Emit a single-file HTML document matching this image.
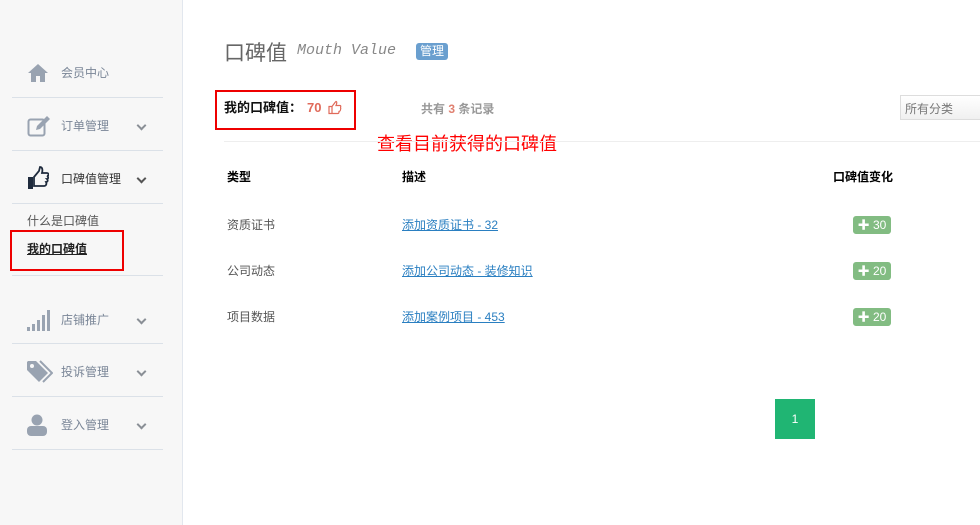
<!DOCTYPE html>
<html><head><meta charset="utf-8"><style>
*{margin:0;padding:0;box-sizing:border-box}
body{width:980px;height:525px;background:#fff;font-family:"Liberation Sans","Noto Sans CJK SC",sans-serif;font-size:12px;position:relative;overflow:hidden;color:#555}
.a{position:absolute;white-space:nowrap}
#side{position:absolute;left:0;top:0;width:183px;height:525px;background:#f7f7f7;border-right:1px solid #e2e7ee}
.ln{position:absolute;left:12px;width:151px;height:1px;background:#dbe1e8}
.mi{position:absolute;left:61px;color:#7a8697;font-size:12px;line-height:14px}
.chev{position:absolute;left:138px;width:7px;height:7px;border-right:2px solid #8a8f96;border-bottom:2px solid #8a8f96;transform:rotate(45deg)}
.badge{position:absolute;left:853px;width:38px;height:18px;background:#82bc82;border-radius:3px;color:#fff;font-size:12px;line-height:18px;text-align:center}
.lnk{color:#2a7fc1;text-decoration:underline}
</style></head><body>
<div id="side">
<svg class="a" style="left:27px;top:63px" width="22" height="20" viewBox="0 0 22 20"><path d="M11 1L1 10h3v9h5v-6h4v6h5v-9h3z" fill="#99a3b1"/></svg>
<div class="mi" style="top:66px">会员中心</div>
<div class="ln" style="top:97px"></div>
<svg class="a" style="left:27px;top:115px" width="24" height="22" viewBox="0 0 24 22"><rect x="1.5" y="4.5" width="16" height="16" rx="2" fill="none" stroke="#99a3b1" stroke-width="2"/><path d="M9 15l1-4 10-10 3 3-10 10z" fill="#99a3b1"/></svg>
<div class="mi" style="top:119px">订单管理</div><div class="chev" style="top:122px"></div>
<div class="ln" style="top:150px"></div>
<svg class="a" style="left:27px;top:166px" width="22" height="25" viewBox="0 0 22 25"><rect x="1" y="11" width="5" height="12" fill="#1f2b3d"/><path d="M7 11l5-6 1-4c2 0 3 2 2 6h5c2 0 2 3 0 3 2 1 1 3 0 3 1 1 1 3-1 3 1 2 0 4-2 4H7z" fill="none" stroke="#1f2b3d" stroke-width="1.8"/></svg>
<div class="mi" style="top:172px;color:#333">口碑值管理</div><div class="chev" style="top:175px;border-color:#555"></div>
<div class="ln" style="top:203px"></div>
<div class="a" style="left:27px;top:212px;color:#555">什么是口碑值</div>
<div class="a" style="left:27px;top:240px;color:#222;font-weight:bold;text-decoration:underline">我的口碑值</div>
<div class="a" style="left:10px;top:230px;width:114px;height:41px;border:2px solid #e00"></div>
<div class="ln" style="top:275px"></div>
<svg class="a" style="left:27px;top:309px" width="24" height="22"><rect x="0" y="18" width="3" height="4" fill="#99a3b1"/><rect x="5" y="15" width="3" height="7" fill="#99a3b1"/><rect x="10" y="11" width="3" height="11" fill="#99a3b1"/><rect x="15" y="6" width="3" height="16" fill="#99a3b1"/><rect x="20" y="1" width="3" height="21" fill="#99a3b1"/></svg>
<div class="mi" style="top:313px">店铺推广</div><div class="chev" style="top:316px"></div>
<div class="ln" style="top:343px"></div>
<svg class="a" style="left:26px;top:360px" width="27" height="24" viewBox="0 0 27 24"><path d="M1 2v8l12 12 9-9L10 1H2z" fill="#99a3b1"/><circle cx="6" cy="6" r="2" fill="#f7f7f7"/><path d="M14 1l12 12-9 9" fill="none" stroke="#99a3b1" stroke-width="2"/></svg>
<div class="mi" style="top:365px">投诉管理</div><div class="chev" style="top:368px"></div>
<div class="ln" style="top:396px"></div>
<svg class="a" style="left:27px;top:414px" width="20" height="22"><circle cx="10" cy="6" r="5.5" fill="#99a3b1"/><rect x="0" y="12" width="20" height="10" rx="4" fill="#99a3b1"/></svg>
<div class="mi" style="top:418px">登入管理</div><div class="chev" style="top:421px"></div>
<div class="ln" style="top:449px"></div>
</div>

<div class="a" style="left:224px;top:37px;font-size:21px;color:#666">口碑值</div>
<div class="a" style="left:297px;top:42px;font-size:15px;color:#888;font-style:italic;font-family:'Liberation Mono',monospace">Mouth Value</div>
<div class="a" style="left:416px;top:43px;width:32px;height:17px;background:#6a9fcf;border-radius:3px;color:#fff;font-size:12px;line-height:17px;text-align:center">管理</div>

<div class="a" style="left:215px;top:90px;width:141px;height:40px;border:2px solid #e00"></div>
<div class="a" style="left:224px;top:100px;height:16px;line-height:16px;font-size:13px;font-weight:bold;color:#111">我的口碑值：</div>
<div class="a" style="left:307px;top:100px;height:16px;line-height:16px;font-size:13px;font-weight:bold;color:#e06a5a">70</div>
<svg class="a" style="left:328px;top:100px" width="14" height="15" viewBox="0 0 14 14"><path d="M1 6h3v7H1zM4 6l3-4 1-1c1 0 1 2 0 4h4c1 0 1 2 0 2 1 0 1 2 0 2 1 0 0 2-1 2 0 1 0 2-1 2H4" fill="none" stroke="#e06a5a" stroke-width="1.2"/></svg>
<div class="a" style="left:421px;top:100px;font-weight:bold;color:#999">共有 <span style="color:#e08070">3</span> 条记录</div>
<div class="a" style="left:900px;top:95px;width:82px;height:25px;border:1px solid #ddd;background:linear-gradient(#fff,#f0f0f0);color:#777;font-size:12px;padding:4px 4px">所有分类</div>
<div class="a" style="left:377px;top:130px;font-size:18px;color:#f00">查看目前获得的口碑值</div>
<div class="a" style="left:224px;top:141px;width:756px;height:1px;background:#eee"></div>

<div class="a" style="left:227px;top:168px;font-weight:bold;color:#000">类型</div>
<div class="a" style="left:402px;top:168px;font-weight:bold;color:#000">描述</div>
<div class="a" style="left:833px;top:168px;font-weight:bold;color:#000">口碑值变化</div>

<div class="a" style="left:227px;top:216px">资质证书</div>
<div class="a lnk" style="left:402px;top:216px">添加资质证书 - 32</div>
<div class="badge" style="top:216px">✚ 30</div>
<div class="a" style="left:227px;top:262px">公司动态</div>
<div class="a lnk" style="left:402px;top:262px">添加公司动态 - 装修知识</div>
<div class="badge" style="top:262px">✚ 20</div>
<div class="a" style="left:227px;top:308px">项目数据</div>
<div class="a lnk" style="left:402px;top:308px">添加案例项目 - 453</div>
<div class="badge" style="top:308px">✚ 20</div>

<div class="a" style="left:775px;top:399px;width:40px;height:40px;background:#20b573;color:#fff;text-align:center;line-height:40px;font-size:12px">1</div>
</body></html>
